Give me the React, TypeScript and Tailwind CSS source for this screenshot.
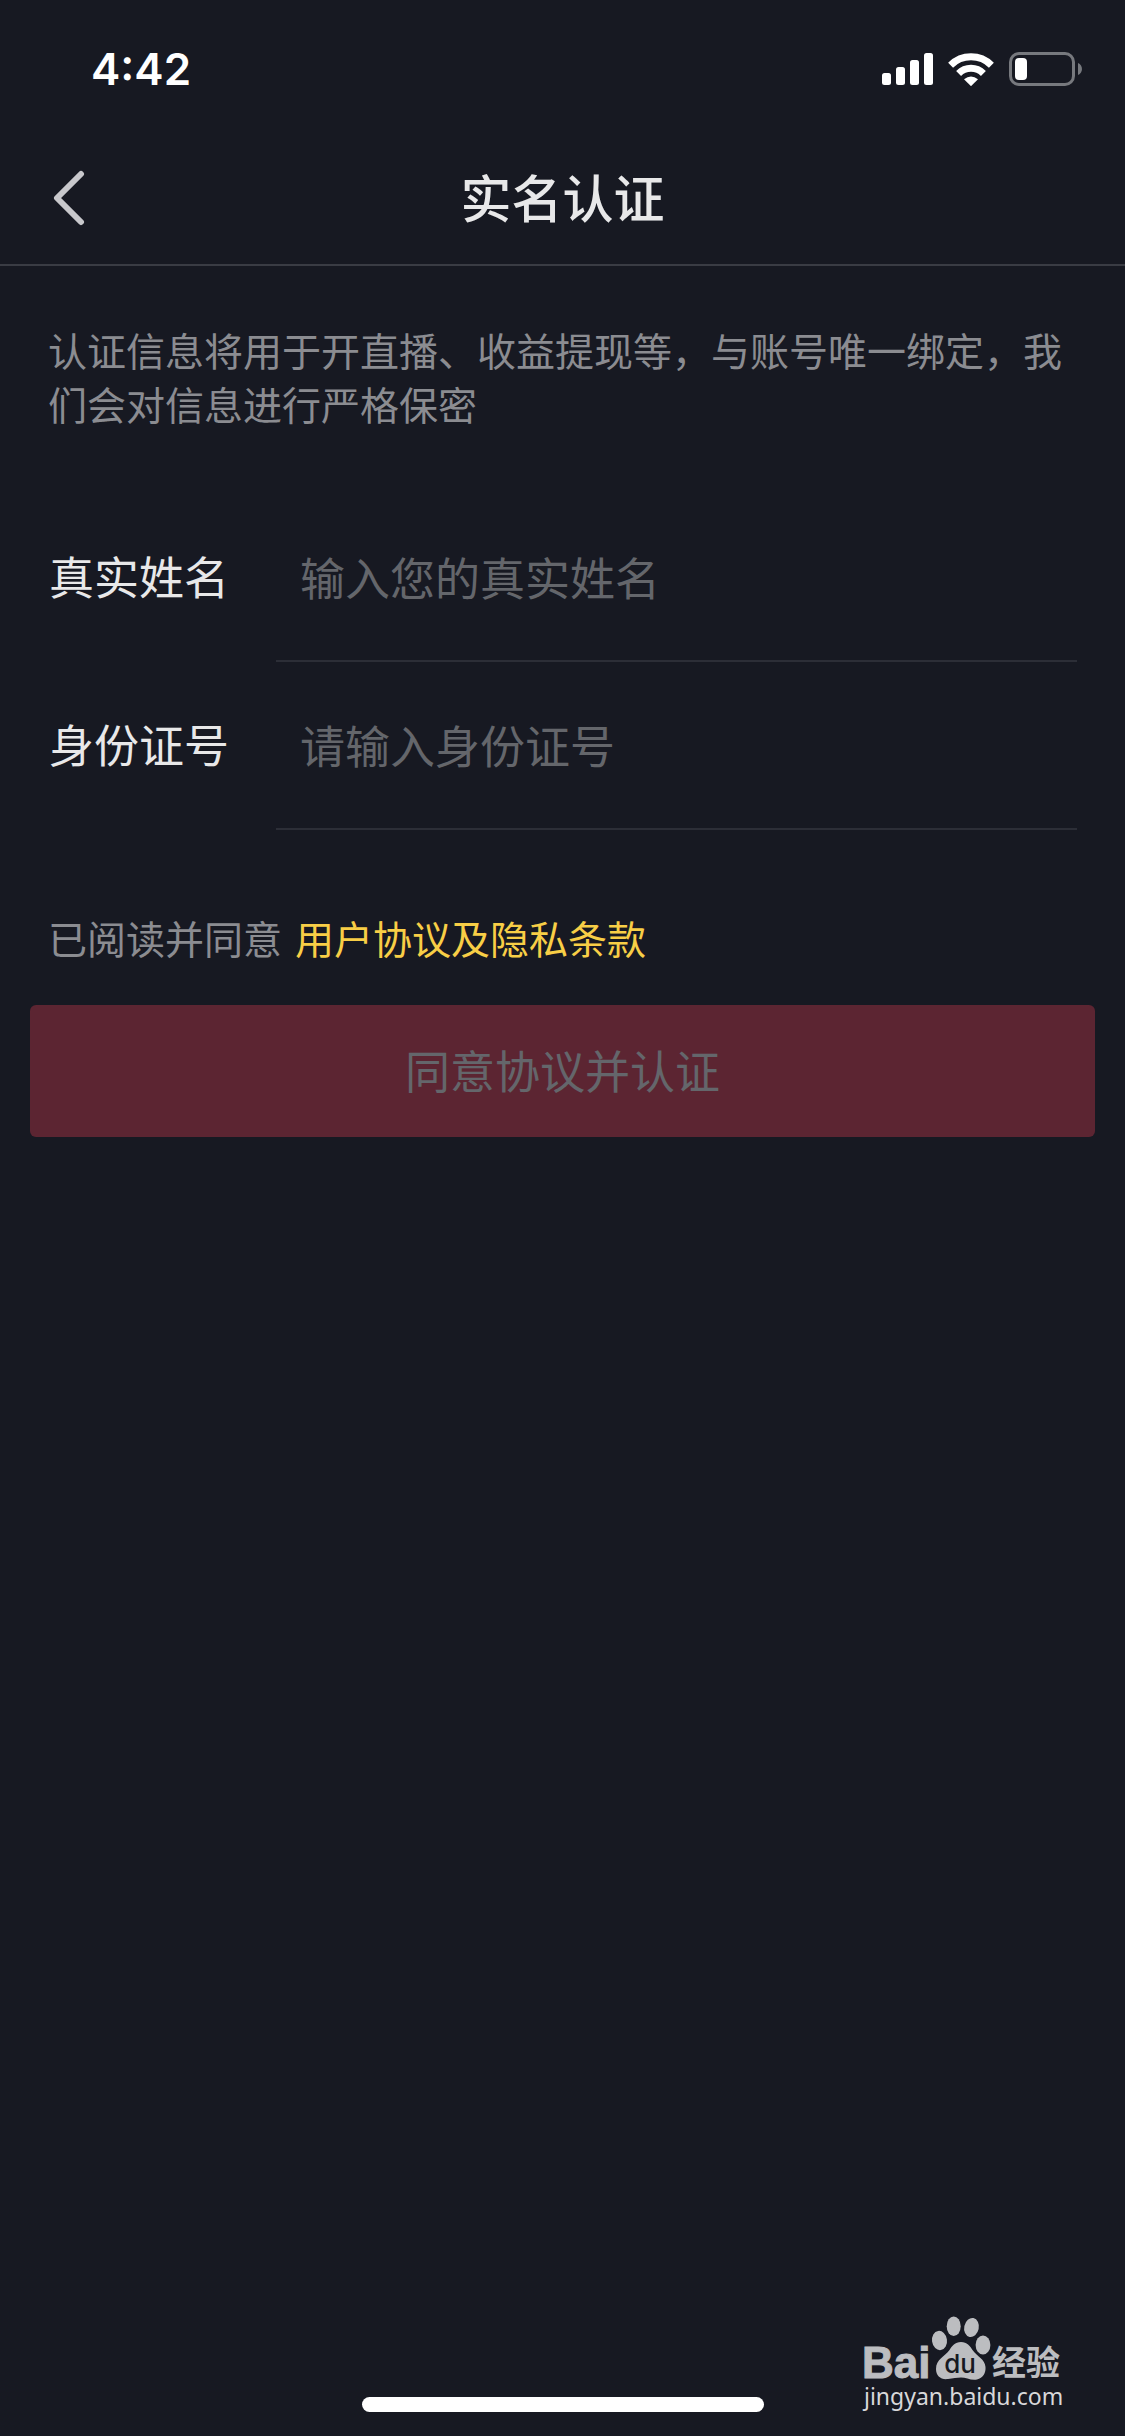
import React from "react";

function SignalIcon() {
  return (
    <svg width="51" height="32" viewBox="0 0 51 32" fill="#fff" aria-hidden="true">
      <rect x="0" y="20" width="9" height="12" rx="2.5" />
      <rect x="14" y="14" width="9" height="18" rx="2.5" />
      <rect x="28" y="7" width="9" height="25" rx="2.5" />
      <rect x="42" y="0" width="9" height="32" rx="2.5" />
    </svg>
  );
}

function WifiIcon() {
  return (
    <svg width="46" height="33" viewBox="0 0 46 33" aria-hidden="true">
      <g fill="none" stroke="#fff" strokeWidth="7">
        <path d="M2.6 12.2A29 29 0 0 1 43.4 12.2" />
        <path d="M10.6 20.4A17.6 17.6 0 0 1 35.4 20.4" />
      </g>
      <path fill="#fff" d="M16 26.3Q23 20.5 30 26.3L23 33.2Z" />
    </svg>
  );
}

function BatteryIcon() {
  return (
    <svg width="74" height="34" viewBox="0 0 74 34" aria-hidden="true">
      <rect x="1.5" y="1.5" width="63" height="31" rx="8.5" fill="none" stroke="#77797e" strokeWidth="3" />
      <path d="M69 11C74.3 13.2 74.3 20.8 69 23Z" fill="#77797e" />
      <rect x="6" y="6" width="12" height="22" rx="4" fill="#fff" />
    </svg>
  );
}

function BaiduMark() {
  return (
    <svg width="200" height="64" viewBox="0 0 200 64" fill="#bcbdc0" role="img" aria-label="Baidu 经验" className="overflow-visible">
      <text x="-2" y="62" fontSize="44" fontWeight="700" fontFamily="'Liberation Sans', sans-serif" stroke="#bcbdc0" strokeWidth="1">Bai</text>
      <ellipse cx="75.500" cy="24.5" rx="7.5" ry="9.7" transform="rotate(-8 75.500 24.5)" />
      <ellipse cx="89.700" cy="10.3" rx="7" ry="9.8" />
      <ellipse cx="107.5" cy="11.5" rx="7.3" ry="9.6" transform="rotate(12 107.5 11.5)" />
      <ellipse cx="119" cy="29" rx="7.4" ry="9.4" />
      <path d="M97 26C91 26 88 30 85.5 34C81 40.500 72 43 72 53C72 60 77 64 84 63C89 62.3 93 61.4 97 61.4C102 61.4 107 64.5 113 63.400C119 62 122 57 121.5 51C121 43 113 40.5 108.5 34C106 30 103 26 97 26Z" />
      <text x="96" y="57" fontSize="26" textAnchor="middle" fill="#171922" fontWeight="500" fontFamily="Inter, sans-serif">du</text>
      <text x="128" y="59" fontSize="34" fontWeight="700" fontFamily="'Noto Sans CJK SC', sans-serif">经验</text>
    </svg>
  );
}

function Field({ id, label, placeholder }: { id: string; label: string; placeholder: string }) {
  return (
    <div className="flex items-start">
      <label htmlFor={id} className="w-[227px] shrink-0 pt-[49px] text-[45px] leading-[66px] text-[#e8e8e9]">
        {label}
      </label>
      <div className="min-w-0 flex-1 border-b-2 border-[#2c2e37] py-[50px]">
        <input
          id={id}
          type="text"
          placeholder={placeholder}
          className="block h-[66px] w-full bg-transparent px-6 text-[45px] text-[#e8e8e9] outline-none placeholder:text-[#64666b] placeholder:opacity-100"
        />
      </div>
    </div>
  );
}

export default function App() {
  return (
    <div
      lang="zh-CN"
      className="relative flex min-h-screen flex-col bg-[#171922] font-['Noto_Sans_CJK_SC',sans-serif]"
    >
      <div className="flex h-[132px] items-center justify-between pt-1.5 pr-[42px] pl-[91px]">
        <span className="font-[Inter,sans-serif] text-[44px] leading-none font-semibold text-white">4:42</span>
        <div className="flex items-center gap-[15px]">
          <SignalIcon />
          <WifiIcon />
          <BatteryIcon />
        </div>
      </div>

      <header className="grid h-[134px] grid-cols-[1fr_auto_1fr] items-center border-b-2 border-[#3a3c44] px-[49px]">
        <button type="button" aria-label="返回" className="justify-self-start p-1">
          <svg width="34" height="56" viewBox="0 0 34 56" fill="none" stroke="#c8c8cc" strokeWidth="6" strokeLinecap="round" strokeLinejoin="round" aria-hidden="true">
            <path d="M28 4L4 28L28 52" />
          </svg>
        </button>
        <h1 className="pb-1 text-[51px] leading-none font-medium text-[#e8e8e9]">实名认证</h1>
      </header>

      <main>
        <p className="px-12 pt-14 text-[39px] leading-[54px] text-[#8b8c91]">
          认证信息将用于开直播、收益提现等，与账号唯一绑定，我们会对信息进行严格保密
        </p>
        <form className="pt-16">
          <div className="pr-12 pl-[49px]">
            <Field id="name" label="真实姓名" placeholder="输入您的真实姓名" />
            <Field id="idno" label="身份证号" placeholder="请输入身份证号" />
          </div>
          <p className="flex gap-[13px] px-12 pt-20 text-[39px] leading-[54px] text-[#8b8c91]">
            已阅读并同意
            <a href="#terms" className="text-[#f8ce46]">用户协议及隐私条款</a>
          </p>
          <div className="px-[30px] pt-[41px]">
            <button type="button" className="h-[132px] w-full rounded-md bg-[#5c2532] pb-0.5 text-[45px] text-[#64666b]">
              同意协议并认证
            </button>
          </div>
        </form>
      </main>

      <div className="mt-auto flex justify-center pb-6">
        <div className="h-[15px] w-[402px] rounded-full bg-white" />
      </div>

      <a href="#baidu" className="absolute right-[61px] bottom-6 flex flex-col items-start">
        <BaiduMark />
        <span className="font-['Noto_Sans',sans-serif] text-[23px] leading-8 text-[#d8d8da]">jingyan.baidu.com</span>
      </a>
    </div>
  );
}
